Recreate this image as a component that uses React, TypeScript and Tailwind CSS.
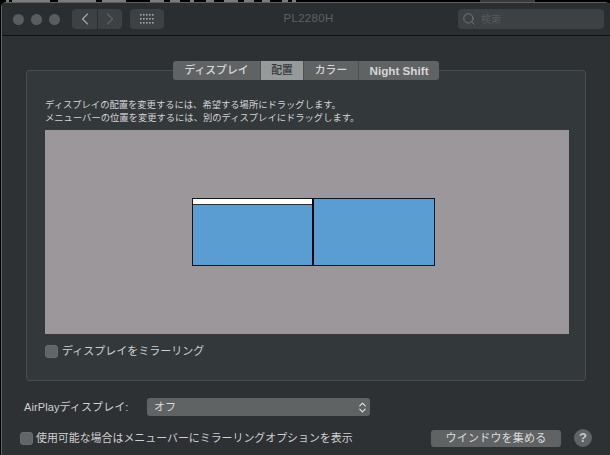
import { ChevronLeft, ChevronRight, ChevronsUpDown, Search } from "lucide-react"

const menuScraps = [
  "w-[3px] ml-[6px]", "w-[38px] ml-[3px]", "w-[38px] ml-[8px]", "w-[24px] ml-[6px]", "w-[14px] ml-[24px]",
  "w-[10px] ml-[6px]", "w-[4px] ml-[10px]", "w-[8px] ml-[12px]", "w-[14px] ml-[10px]", "w-[10px] ml-[6px]",
  "w-[8px] ml-[8px]", "w-[6px] ml-[12px]", "w-[4px] ml-[4px]",
]

function Checkbox() {
  return <span className="h-[13px] w-[13px] shrink-0 rounded-[3px] bg-[#626567] border border-[#6a6d6f]" />
}

function Tab({ label, active, className }: { label: string; active?: boolean; className?: string }) {
  return (
    <div
      className={
        "flex h-full items-center justify-center border-r border-[#4c5052] last:border-r-0 " +
        (active ? "bg-[#979a9b] text-[#33383a] " : "bg-[#5f6364] text-[#d6d6d6] ") +
        (className ?? "")
      }
    >
      {label}
    </div>
  )
}

export default function App() {
  return (
    <div className="flex h-[455px] w-[610px] flex-col overflow-hidden bg-black text-[#cfd0d0] font-['Liberation_Sans','Noto_Sans_CJK_JP',sans-serif]">
      <div className="flex h-[2px] shrink-0 items-start">
        {menuScraps.map((c, i) => (
          <span key={i} className={"h-[2px] bg-[#7c7c7c] " + c} />
        ))}
        <span className="ml-auto mr-[75px] h-[2px] w-[55px] bg-[#3a3a3a]" />
      </div>

      <div className="ml-px flex min-h-0 flex-1 flex-col rounded-t-[5px] border-l border-t border-[#5d6061] bg-[#2d3134]">
        <header className="flex h-[33px] shrink-0 items-center border-b border-[#0f1112] bg-[#2a2e30] pl-[11px] pr-[6px]">
          <div className="flex gap-[7px]">
            <span className="h-[11px] w-[11px] rounded-full bg-[#5a5d60]" />
            <span className="h-[11px] w-[11px] rounded-full bg-[#5a5d60]" />
            <span className="h-[11px] w-[11px] rounded-full bg-[#5a5d60]" />
          </div>
          <div className="ml-[12px] flex h-[20px] gap-px">
            <div className="flex w-[25px] items-center justify-center rounded-l-[4px] bg-[#3d4143]">
              <ChevronLeft size={20} strokeWidth={1.4} className="text-[#a4a6a7]" />
            </div>
            <div className="flex w-[24px] items-center justify-center rounded-r-[4px] bg-[#3d4143]">
              <ChevronRight size={20} strokeWidth={1.4} className="text-[#5f6264]" />
            </div>
          </div>
          <div className="ml-[8px] flex h-[20px] w-[34px] items-center justify-center rounded-[4px] bg-[#3d4143]">
            <svg width="14" height="10" viewBox="0 0 14 10" className="fill-[#a4a6a7]">
              {[0, 4, 8].map((y) =>
                [0, 3, 6, 9, 12].map((x) => <rect key={`${x}-${y}`} x={x} y={y} width="1.6" height="1.6" />)
              )}
            </svg>
          </div>
          <div className="flex-1 pr-[5px] text-center text-[11.5px] tracking-[0.3px] text-[#5d6163]">PL2280H</div>
          <div className="flex h-[20px] w-[146px] items-center gap-[5px] rounded-[4px] bg-[#3d4143] pl-[4px]">
            <Search size={14} strokeWidth={1.2} className="text-[#85888a]" />
            <span className="text-[10px] text-[#56595b]">検索</span>
          </div>
        </header>

        <main className="flex min-h-0 flex-1 flex-col px-[24px]">
          <section className="relative mt-[34px] h-[311px] w-[560px] shrink-0 rounded-[3px] border border-[#484c4e] bg-[#33383a] px-[18px] pt-[28px]">
            <div className="absolute left-[146px] top-[-10px] flex h-[19px] w-[266px] overflow-hidden rounded-[3px] text-[10.8px] font-medium">
              <Tab className="w-[88px]" label="ディスプレイ" />
              <Tab className="w-[43px]" label="配置" active />
              <Tab className="w-[55px]" label="カラー" />
              <Tab className="flex-1 text-[11.7px] font-bold" label="Night Shift" />
            </div>

            <p className="text-[9.3px] leading-[13px] text-[#d4d5d5]">
              ディスプレイの配置を変更するには、希望する場所にドラッグします。
              <br />
              メニューバーの位置を変更するには、別のディスプレイにドラッグします。
            </p>

            <div className="relative mt-[5px] h-[204px] w-[524px] bg-[#9c979b]">
              <div className="absolute left-[147px] top-[68px] flex h-[68px] w-[243px] border border-[#11161c] bg-[#5a9dd2]">
                <div className="w-[121px] border-r-2 border-[#05080b]">
                  <div className="h-[6px] border-b border-[#2a3036] bg-white" />
                </div>
              </div>
            </div>

            <label className="mt-[9px] flex items-center gap-[4px] text-[11px]">
              <Checkbox />
              ディスプレイをミラーリング
            </label>
          </section>

          <div className="-ml-[2px] mt-[17px] flex h-[18px] shrink-0 items-center">
            <span className="w-[123px] text-[11px] tracking-[0.1px] text-[#d0d1d1]">AirPlayディスプレイ:</span>
            <div className="flex h-[18px] w-[223px] items-center justify-between rounded-[3px] bg-[#5f6364] pl-[7px] pr-[1px] text-[11px] text-[#dcdcdc]">
              オフ
              <ChevronsUpDown size={13} strokeWidth={2.2} className="text-[#e0e0e0]" />
            </div>
          </div>

          <div className="-ml-[6px] mt-[11px] flex h-[22px] shrink-0 items-center">
            <Checkbox />
            <span className="ml-[3px] text-[10.93px]">使用可能な場合はメニューバーにミラーリングオプションを表示</span>
            <button className="ml-auto flex h-[17px] w-[130px] items-center justify-center rounded-[3px] bg-[#5f6364] text-[11px] tracking-[0.2px] text-[#dcdcdc]">
              ウインドウを集める
            </button>
            <span className="ml-[13px] mr-[-6px] flex h-[18px] w-[18px] shrink-0 items-center justify-center rounded-full bg-[#5f6364] text-[13px] font-bold text-[#c8c8c8]">
              ?
            </span>
          </div>
        </main>
      </div>
    </div>
  )
}
